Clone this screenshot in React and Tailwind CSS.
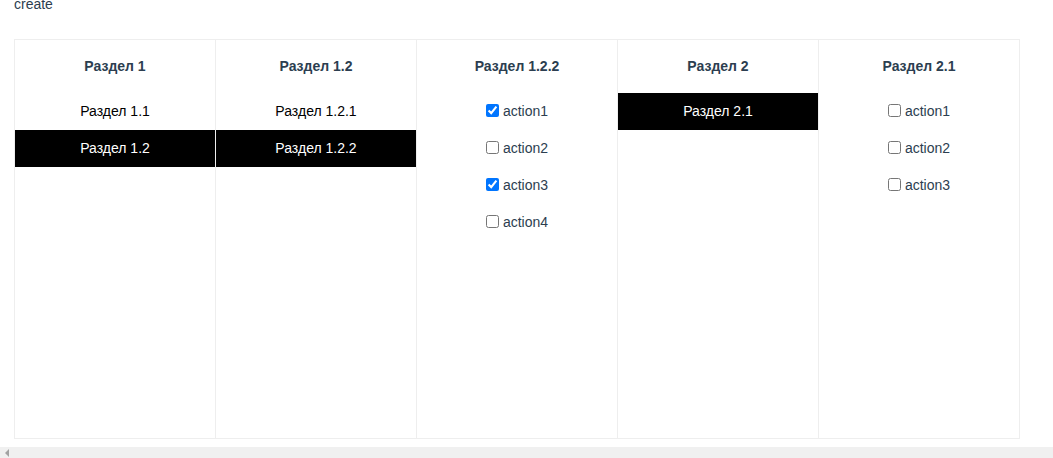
import React from 'react';

const columns = [
  { title: 'Раздел 1', items: [{ label: 'Раздел 1.1' }, { label: 'Раздел 1.2', active: true }] },
  { title: 'Раздел 1.2', items: [{ label: 'Раздел 1.2.1' }, { label: 'Раздел 1.2.2', active: true }] },
  {
    title: 'Раздел 1.2.2',
    actions: [
      { label: 'action1', checked: true },
      { label: 'action2' },
      { label: 'action3', checked: true },
      { label: 'action4' },
    ],
  },
  { title: 'Раздел 2', items: [{ label: 'Раздел 2.1', active: true }] },
  { title: 'Раздел 2.1', actions: [{ label: 'action1' }, { label: 'action2' }, { label: 'action3' }] },
];

const Column = ({ col }) => (
  <div className="w-[201px] border-r border-[#eeeeee] flex flex-col">
    <div className="h-[53px] pb-[2px] flex items-center justify-center font-bold text-[#2c3e50]">{col.title}</div>
    {col.items &&
      col.items.map((item) => (
        <div
          key={item.label}
          className={
            item.active
              ? 'h-[37px] pb-[2px] flex items-center justify-center bg-black text-white'
              : 'h-[37px] pb-[2px] flex items-center justify-center text-black'
          }
        >
          {item.label}
        </div>
      ))}
    {col.actions &&
      col.actions.map((a) => (
        <label key={a.label} className="h-[37px] pb-[2px] flex items-center justify-center text-[#2c3e50]">
          <input type="checkbox" defaultChecked={a.checked} className="w-[13px] h-[13px] mr-1 accent-[#0075ff]" />
          {a.label}
        </label>
      ))}
  </div>
);

export default function App() {
  return (
    <div className="h-[458px] overflow-hidden bg-white text-sm font-['Liberation_Sans',Arial,sans-serif] flex flex-col">
      <div className="px-[14px] -mt-[4px] h-[16px] leading-4 text-[#2c3e50]">create</div>
      <div className="ml-[14px] mt-[27px] flex border-l border-t border-b border-[#eeeeee] h-[400px] w-fit">
        {columns.map((col) => (
          <Column key={col.title} col={col} />
        ))}
      </div>
      <div className="mt-[8px] flex-1 bg-[#f0f0f0] flex items-end pl-[4px] pb-[1px]">
        <svg width="6" height="8" viewBox="0 0 6 8">
          <path d="M5 0 L1 4 L5 8 Z" fill="#a3a3a3" />
        </svg>
      </div>
    </div>
  );
}
